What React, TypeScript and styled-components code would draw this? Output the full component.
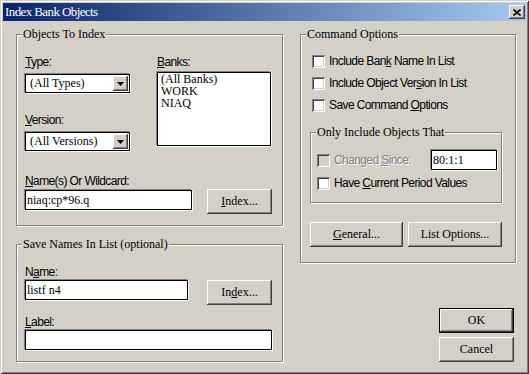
import React from 'react';
import styled, { createGlobalStyle, css } from 'styled-components';

const serif = `"Liberation Serif", "Times New Roman", serif`;
const sans = `"Liberation Sans", Arial, sans-serif`;

const GlobalStyle = createGlobalStyle`
  html, body {
    margin: 0;
    padding: 0;
    background: #d4d0c8;
  }
`;

// classic 3d edges
const raised = css`
  background: #d4d0c8;
  box-shadow: inset -1px -1px #404040, inset 1px 1px #fff, inset -2px -2px #808080, inset 2px 2px #d4d0c8;
`;

const sunken = css`
  box-sizing: border-box;
  border: 1px solid #000;
  box-shadow: -1px -1px #808080, 1px 1px #fff;
  background: #fff;
`;

const Dialog = styled.div`
  box-sizing: border-box;
  width: 529px;
  height: 374px;
  padding: 3px;
  display: flex;
  flex-direction: column;
  background: #d4d0c8;
  box-shadow: inset 1px 1px #d4d0c8, inset -1px -1px #404040, inset 2px 2px #fff, inset -2px -2px #808080;
`;

const TitleBar = styled.div`
  flex: none;
  height: 18px;
  display: flex;
  align-items: center;
  justify-content: space-between;
  padding: 0 1px 0 2px;
  background: linear-gradient(to right, #0a246a, #a6caf0);
`;

const Title = styled.span`
  font: 13px/18px ${serif};
  letter-spacing: -0.6px;
  color: #fff;
`;

const CloseButton = styled.div`
  box-sizing: border-box;
  width: 16px;
  height: 14px;
  display: flex;
  align-items: center;
  justify-content: center;
  ${raised}
`;

const Body = styled.div`
  flex: 1;
  display: flex;
  gap: 17px;
  padding: 13px 10px 9px 13px;
`;

const LeftColumn = styled.div`
  width: 267px;
  display: flex;
  flex-direction: column;
  gap: 18px;
`;

const RightColumn = styled.div`
  width: 216px;
  display: flex;
  flex-direction: column;
`;

const Group = styled.div<{ $height: number }>`
  position: relative;
  box-sizing: border-box;
  height: ${p => p.$height}px;
  display: flex;
  flex-direction: column;
  border: 1px solid #808080;
  box-shadow: inset 1px 1px #fff, 1px 1px #fff;
`;

const IndexGroup = styled(Group)`
  padding: 20px 0 11px 8px;
`;

const SaveGroup = styled(Group)`
  padding: 20px 0 14px 8px;
`;

const CommandGroup = styled(Group)`
  padding: 15px 0 0 9px;
`;

const OnlyGroup = styled(Group)`
  width: 192px;
  margin-top: 16px;
  padding: 15px 4px 8px 6px;
`;

const Legend = styled.span`
  position: absolute;
  top: -8px;
  left: 5px;
  padding: 0 1px;
  background: #d4d0c8;
  font: 12px/14px ${serif};
  color: #000;
  white-space: nowrap;
`;

const FieldLabel = styled.label`
  display: block;
  font: 12px/14px ${sans};
  letter-spacing: -0.6px;
  color: #000;
`;

const Field = styled.div<{ $gap: number }>`
  display: flex;
  flex-direction: column;
  gap: ${p => p.$gap}px;
`;

const TopRow = styled.div`
  display: flex;
  gap: 27px;
`;

const Stack = styled.div`
  display: flex;
  flex-direction: column;
  gap: 20px;
`;

const Select = styled.div`
  ${sunken}
  width: 105px;
  height: 19px;
  display: flex;
  align-items: center;
  justify-content: space-between;
  padding: 0 1px 0 4px;
  font: 12px ${serif};
`;

const DropArrow = styled.span`
  box-sizing: border-box;
  width: 15px;
  height: 15px;
  display: flex;
  align-items: center;
  justify-content: center;
  ${raised}
`;

const ListBox = styled.ul`
  ${sunken}
  width: 114px;
  height: 74px;
  margin: 0;
  padding: 0 3px;
  list-style: none;
  font: 12px/12px ${serif};
`;

const TextBox = styled.input<{ $width: number }>`
  ${sunken}
  width: ${p => p.$width}px;
  height: 20px;
  margin: 0;
  padding: 0 1px;
  font: 12px ${serif};
  color: #000;
  outline: none;
`;

const FieldRow = styled.div<{ $gap: number }>`
  display: flex;
  align-items: flex-start;
  gap: ${p => p.$gap}px;
`;

const IndexRow = styled(FieldRow)`
  margin-top: auto;
  align-items: flex-end;
`;

const Button = styled.div<{ $width: number; $default?: boolean }>`
  box-sizing: border-box;
  flex: none;
  width: ${p => p.$width}px;
  height: 25px;
  display: flex;
  align-items: center;
  justify-content: center;
  font-family: ${serif};
  font-size: 12px;
  font-weight: normal;
  color: #000;
  cursor: default;
  ${raised}
  ${p =>
    p.$default &&
    css`
      box-shadow: inset 0 0 0 1px #000, inset -2px -2px #404040, inset 2px 2px #fff, inset -3px -3px #808080;
    `}
`;

const CheckList = styled.div`
  display: flex;
  flex-direction: column;
  padding-left: 2px;
`;

const CheckRow = styled.label<{ $height: number; $disabled?: boolean }>`
  display: flex;
  align-items: center;
  gap: 4px;
  height: ${p => p.$height}px;
  font: 12px ${sans};
  letter-spacing: -0.6px;
  color: ${p => (p.$disabled ? '#808080' : '#000')};
  text-shadow: ${p => (p.$disabled ? '1px 1px #fff' : 'none')};
  white-space: nowrap;
`;

const Check = styled.span<{ $disabled?: boolean }>`
  box-sizing: border-box;
  flex: none;
  width: 13px;
  height: 13px;
  background: ${p => (p.$disabled ? '#d4d0c8' : '#fff')};
  box-shadow: inset 1px 1px #808080, inset -1px -1px #fff, inset 2px 2px #404040, inset -2px -2px #d4d0c8;
`;

const SinceBox = styled(TextBox)`
  margin-left: auto;
`;

const ButtonRow = styled.div`
  display: flex;
  gap: 5px;
  margin-top: 19px;
`;

const DialogButtons = styled.div`
  margin-top: auto;
  margin-right: 2px;
  align-self: flex-end;
  display: flex;
  flex-direction: column;
  gap: 4px;
`;

const Arrow = () => (
  <svg width="7" height="4" viewBox="0 0 7 4">
    <path d="M0 0h7L3.5 4z" fill="#000" />
  </svg>
);

export default function App() {
  return (
    <>
      <GlobalStyle />
      <Dialog>
        <TitleBar>
          <Title>Index Bank Objects</Title>
          <CloseButton role="button" aria-label="Close">
            <svg width="8" height="7" viewBox="0 0 8 7">
              <path d="M0.5 0.5l7 6M7.5 0.5l-7 6" stroke="#000" strokeWidth="1.6" />
            </svg>
          </CloseButton>
        </TitleBar>

        <Body>
          <LeftColumn>
            <IndexGroup $height={192}>
              <Legend>Objects To Index</Legend>
              <TopRow>
                <Stack>
                  <Field $gap={5}>
                    <FieldLabel><u>T</u>ype:</FieldLabel>
                    <Select>
                      <span>(All Types)</span>
                      <DropArrow><Arrow /></DropArrow>
                    </Select>
                  </Field>
                  <Field $gap={5}>
                    <FieldLabel><u>V</u>ersion:</FieldLabel>
                    <Select>
                      <span>(All Versions)</span>
                      <DropArrow><Arrow /></DropArrow>
                    </Select>
                  </Field>
                </Stack>
                <Field $gap={3}>
                  <FieldLabel><u>B</u>anks:</FieldLabel>
                  <ListBox>
                    <li>(All Banks)</li>
                    <li>WORK</li>
                    <li>NIAQ</li>
                  </ListBox>
                </Field>
              </TopRow>
              <IndexRow $gap={15}>
                <Field $gap={2} style={{ marginBottom: 4 }}>
                  <FieldLabel><u>N</u>ame(s) Or Wildcard:</FieldLabel>
                  <TextBox $width={167} defaultValue="niaq:cp*96.q" />
                </Field>
                <Button role="button" $width={65}><span><u>I</u>ndex...</span></Button>
              </IndexRow>
            </IndexGroup>

            <SaveGroup $height={118}>
              <Legend>Save Names In List (optional)</Legend>
              <FieldRow $gap={19}>
                <Field $gap={1}>
                  <FieldLabel>N<u>a</u>me:</FieldLabel>
                  <TextBox $width={163} defaultValue="listf n4" />
                </Field>
                <Button role="button" $width={65} style={{ marginTop: 15 }}><span>In<u>d</u>ex...</span></Button>
              </FieldRow>
              <Field $gap={1} style={{ marginTop: 10 }}>
                <FieldLabel><u>L</u>abel:</FieldLabel>
                <TextBox $width={247} defaultValue="" />
              </Field>
            </SaveGroup>
          </LeftColumn>

          <RightColumn>
            <CommandGroup $height={229}>
              <Legend>Command Options</Legend>
              <CheckList>
                <CheckRow $height={22}><Check /><span>Include Ban<u>k</u> Name In List</span></CheckRow>
                <CheckRow $height={22}><Check /><span>Include Object Ver<u>s</u>ion In List</span></CheckRow>
                <CheckRow $height={22}><Check /><span>Save Command <u>O</u>ptions</span></CheckRow>
              </CheckList>
              <OnlyGroup $height={71}>
                <Legend>Only Include Objects That</Legend>
                <CheckRow $height={24} $disabled>
                  <Check $disabled />
                  <span>Changed <u>S</u>ince:</span>
                  <SinceBox $width={66} defaultValue="80:1:1" />
                </CheckRow>
                <CheckRow $height={22}><Check /><span>Have <u>C</u>urrent Period Values</span></CheckRow>
              </OnlyGroup>
              <ButtonRow>
                <Button role="button" $width={93}><span><u>G</u>eneral...</span></Button>
                <Button role="button" $width={94}><span>List Options...</span></Button>
              </ButtonRow>
            </CommandGroup>

            <DialogButtons>
              <Button role="button" $width={75} $default>OK</Button>
              <Button role="button" $width={75}>Cancel</Button>
            </DialogButtons>
          </RightColumn>
        </Body>
      </Dialog>
    </>
  );
}
